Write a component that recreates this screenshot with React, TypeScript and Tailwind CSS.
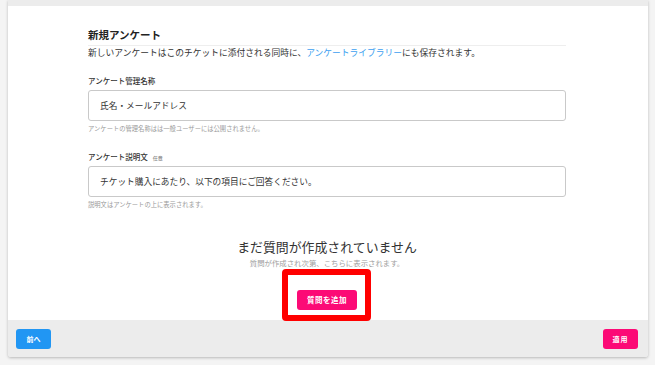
const FONT = '"Noto Sans CJK JP", "Noto Sans", sans-serif'

function Field({
  label,
  optional,
  value,
  help,
}: {
  label: string
  optional?: boolean
  value: string
  help: string
}) {
  return (
    <div>
      <div className="flex items-end gap-[5px] text-[7.5px] leading-[10px] font-medium text-[#333]">
        <span>{label}</span>
        {optional && <span className="text-[5px] leading-[8px] text-[#888]">任意</span>}
      </div>
      <div className="mt-[4px] h-[31px] border border-[#c9c9c9] rounded-[3px] flex items-center pl-[11px] text-[8.7px] text-[#333]">
        {value}
      </div>
      <p className="mt-[3px] text-[6.3px] leading-[9px] text-[#9a9a9a]">{help}</p>
    </div>
  )
}

export default function App() {
  return (
    <div className="w-[655px] h-[365px] bg-[#f4f4f4] overflow-hidden" style={{ fontFamily: FONT }}>
      <div className="ml-[8px] w-[640px] shadow-[0_1px_3px_rgba(0,0,0,0.25)] rounded-b-[3px] overflow-hidden">
        {/* top strip */}
        <div className="h-[6px] bg-[#ececec]" />

        {/* body */}
        <div className="h-[314px] bg-white pl-[80px] pr-[82px] pt-[22px]">
          <h2 className="text-[10.5px] leading-[14px] font-bold text-[#222]">新規アンケート</h2>
          <div className="mt-[3px] border-b border-[#eeeeee]" />
          <p className="mt-[1px] text-[8.75px] leading-[12px] text-[#333]">
            新しいアンケートはこのチケットに添付される同時に、
            <span className="text-[#3d9ff0]">アンケートライブラリー</span>
            にも保存されます。
          </p>

          <div className="mt-[17px]">
            <Field
              label="アンケート管理名称"
              value="氏名・メールアドレス"
              help="アンケートの管理名称はは一般ユーザーには公開されません。"
            />
          </div>
          <div className="mt-[19px]">
            <Field
              label="アンケート説明文"
              optional
              value="チケット購入にあたり、以下の項目にご回答ください。"
              help="説明文はアンケートの上に表示されます。"
            />
          </div>

          {/* empty state */}
          <div className="mt-[30px] flex flex-col items-center">
            <p className="text-[12.9px] leading-[16px] text-[#333]">まだ質問が作成されていません</p>
            <p className="mt-[3px] text-[7.4px] leading-[10px] text-[#a0a0a0]">
              質問が作成され次第、こちらに表示されます。
            </p>
            <div className="relative mt-[16px]">
              <button className="w-[60px] h-[20px] rounded-[3px] bg-[#fc0a76] text-white text-[7.5px] font-bold tracking-[0.5px]">
                質問を追加
              </button>
              <span className="absolute -left-[15px] -top-[15px] w-[89px] h-[52px] border-[6px] border-[#ff0000] rounded-[4px] pointer-events-none" />
            </div>
          </div>
        </div>

        {/* footer */}
        <div className="h-[37px] bg-[#ececec] flex items-start justify-between pl-[8px] pr-[10px] pt-[9px]">
          <button className="w-[35px] h-[20px] rounded-[3px] bg-[#2196f3] text-white text-[7px] font-bold">
            前へ
          </button>
          <button className="w-[35px] h-[20px] rounded-[3px] bg-[#fc0a76] text-white text-[7px] font-bold tracking-[1px]">
            適用
          </button>
        </div>
      </div>
    </div>
  )
}
